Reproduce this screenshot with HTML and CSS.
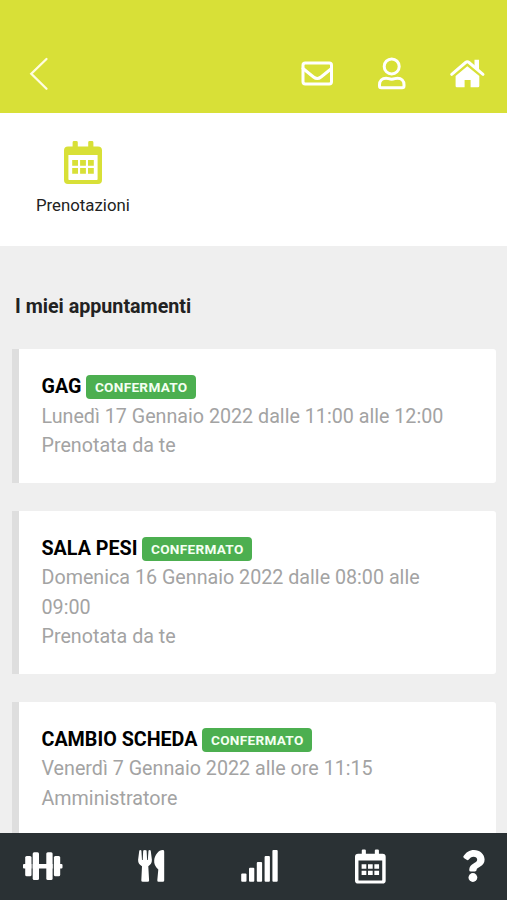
FILE: index.html
```html
<!DOCTYPE html>
<html lang="it">
<head>
<meta charset="utf-8">
<meta name="viewport" content="width=device-width, initial-scale=1">
<title>Prenotazioni</title>
<link rel="stylesheet" href="styles.css">
</head>
<body>
<div class="app">
  <header class="topbar">
    <svg class="icon" width="20" height="33" viewBox="29 57 20 33"><path class="line thin" d="M46.5 59 31.3 73.8 46.5 88.7"/></svg>
    <nav class="topbar-actions">
      <svg class="icon" width="33" height="33" viewBox="301 57 33 33"><rect class="line" x="303" y="63" width="28.5" height="21" rx="2.2"/><path class="line" d="M303 68.5 313.5 77Q317.3 80 321 77L331.5 68.5"/></svg>
      <svg class="icon" width="29" height="33" viewBox="377.5 57 29 33"><circle class="line" cx="391.2" cy="66.4" r="7.5"/><path class="line" d="M385.6 78.2C381.5 78.2 379 81 379 84.8V86Q379 87.7 380.8 87.7H401.6Q403.5 87.7 403.5 86V84.8C403.5 81 401 78.2 397 78.2C394.5 78.2 394 79.2 391.2 79.2S388 78.2 385.6 78.2Z"/></svg>
      <svg class="icon" width="35" height="33" viewBox="450 57 35 33"><path class="fill" d="M467.3 66.2 479.3 76V86Q479.3 87.3 478 87.3H470.6V80H464.6V87.3H456.9Q455.6 87.3 455.6 86V76Z"/><path class="line" d="M451.7 74.3 465.6 62.5Q467.3 61.1 469 62.5L483 74.3"/><path class="fill" d="M474.5 59.8H479V70L474.5 66Z"/></svg>
    </nav>
  </header>

  <section class="shortcuts">
    <a class="shortcut">
      <svg class="icon lime" width="38" height="43" viewBox="0 0 38 43"><path class="fill" fill-rule="evenodd" d="M10 0H12.4Q13.8 0 13.8 1.4V5.5H24.2V1.4Q24.2 0 25.6 0H28Q29.4 0 29.4 1.4V5.5H34Q38 5.5 38 9.5V39Q38 43 34 43H4Q0 43 0 39V9.5Q0 5.5 4 5.5H8.6V1.4Q8.6 0 10 0ZM4.4 14V38.2Q4.4 39 5.2 39H32.8Q33.6 39 33.6 38.2V14Z"/><path class="fill" d="M8.2 19h5.8v5.8h-5.8zM16.1 19h5.8v5.8h-5.8zM24 19h5.8v5.8h-5.8zM8.2 26.9h5.8v5.8h-5.8zM16.1 26.9h5.8v5.8h-5.8zM24 26.9h5.8v5.8h-5.8z"/></svg>
      <span class="shortcut-label">Prenotazioni</span>
    </a>
  </section>

  <main class="content">
    <h1 class="title">I miei appuntamenti</h1>
    <article class="card">
      <h2 class="card-title"><span>GAG</span><span class="badge">CONFERMATO</span></h2>
      <p>Lunedì 17 Gennaio 2022 dalle 11:00 alle 12:00</p>
      <p>Prenotata da te</p>
    </article>
    <article class="card">
      <h2 class="card-title"><span>SALA PESI</span><span class="badge">CONFERMATO</span></h2>
      <p>Domenica 16 Gennaio 2022 dalle 08:00 alle 09:00</p>
      <p>Prenotata da te</p>
    </article>
    <article class="card">
      <h2 class="card-title"><span>CAMBIO SCHEDA</span><span class="badge">CONFERMATO</span></h2>
      <p>Venerdì 7 Gennaio 2022 alle ore 11:15</p>
      <p>Amministratore</p>
    </article>
  </main>

  <nav class="tabbar">
    <svg class="icon" width="42" height="35" viewBox="20 849 42 35"><rect class="fill" x="23" y="864" width="39.5" height="4.6" rx="1"/><rect class="gap" x="31.4" y="863" width="1.3" height="7"/><rect class="gap" x="52.6" y="863" width="1.3" height="7"/><rect class="fill" x="25.2" y="856" width="6.3" height="20.2" rx="1.5"/><rect class="fill" x="32.7" y="852.2" width="6.3" height="27.8" rx="1.5"/><rect class="fill" x="46.3" y="852.2" width="6.3" height="27.8" rx="1.5"/><rect class="fill" x="53.9" y="856" width="6.3" height="20.2" rx="1.5"/></svg>
    <svg class="icon" width="27" height="35" viewBox="138 849 27 35"><path class="fill" d="M139.3 850.4Q140.3 849.8 141.4 850.4L142 860H142.7L143.2 850.4Q144.9 849.7 146.6 850.4L147.1 860H147.8L148.5 850.4Q149.6 849.8 150.7 850.4L151.9 859.8C152 863 150.5 865 148.3 866.2L149.1 880.4Q149.1 881.8 147.7 881.8H142.8Q141.3 881.8 141.3 880.4L142 866.2C139.5 865 138 863 138.1 859.8Z"/><path class="fill" d="M164.2 851.4V880.4Q164.2 881.8 162.8 881.8H158.6Q157.2 881.8 157.3 880.3L158.3 869.6C155 866.8 153.9 863.5 154.2 860.3C154.7 855 158.6 850 162.8 850Q164.2 850 164.2 851.4Z"/></svg>
    <svg class="icon" width="38" height="35" viewBox="241 849 38 35"><rect class="fill" x="241.2" y="873.6" width="5.3" height="8.2" rx="1"/><rect class="fill" x="249" y="867.8" width="5.3" height="14" rx="1"/><rect class="fill" x="256.8" y="861.9" width="5.3" height="19.9" rx="1"/><rect class="fill" x="264.6" y="856" width="5.3" height="25.8" rx="1"/><rect class="fill" x="272.4" y="850" width="5.3" height="31.8" rx="1"/></svg>
    <svg class="icon" width="31" height="35" viewBox="0 0 39.4 44.5"><path class="fill" fill-rule="evenodd" d="M10 .6H12.4Q13.8 .6 13.8 2V6H25.2V2Q25.2 .6 26.6 .6H29Q30.4 .6 30.4 2V6H35Q39 6 39 10V40Q39 44 35 44H4Q0 44 0 40V10Q0 6 4 6H8.6V2Q8.6 .6 10 .6ZM4.4 14.6V39.4Q4.4 40.2 5.2 40.2H33.8Q34.6 40.2 34.6 39.4V14.6Z"/><path class="fill" d="M8.4 19.4h6v5.6h-6zM16.5 19.4h6v5.6h-6zM24.6 19.4h6v5.6h-6zM8.4 27.6h6v5.6h-6zM16.5 27.6h6v5.6h-6zM24.6 27.6h6v5.6h-6z"/></svg>
    <svg class="icon" width="23" height="35" viewBox="462 849 23 35"><path class="fill" d="M463.4 856.3C466 852.3 469.3 850 474 850C479.8 850 484.6 854.2 484.6 859.6C484.6 866.8 476.6 867.3 476.6 869.8Q476.6 871.6 474.8 871.6H470.9Q469.2 871.6 469.2 869.9C469.2 863 477.2 863.4 477.2 859.7C477.2 857.8 475.6 856.7 473.6 856.7C471.3 856.7 470.2 857.8 468.8 859.5Q467.8 860.7 466.6 859.8L463.9 857.9Q463 857.2 463.4 856.3Z"/><circle class="fill" cx="472.9" cy="877.5" r="4.4"/></svg>
  </nav>
</div>
</body>
</html>
```
FILE: styles.css
```css
* {
  box-sizing: border-box;
}

body {
  margin: 0;
  font-family: Roboto, sans-serif;
  background: #efefef;
}

.app {
  display: flex;
  flex-direction: column;
  height: 900px;
  overflow: hidden;
}

.icon {
  display: block;
  flex: none;
  overflow: visible;
  color: #fff;
}

.lime {
  color: #d8e037;
}

.fill {
  fill: currentColor;
}

.line {
  fill: none;
  stroke: currentColor;
  stroke-width: 3;
  stroke-linejoin: round;
  stroke-linecap: round;
}

.thin {
  stroke: #fffde0;
  stroke-width: 2.3;
  stroke-linejoin: miter;
}

.gap {
  fill: #2a3134;
}

.topbar {
  flex: none;
  display: flex;
  align-items: center;
  justify-content: space-between;
  height: 113px;
  padding: 34px 22px 0 29px;
  background: #d8e037;
}

.topbar-actions {
  display: flex;
  gap: 43.5px;
}

.shortcuts {
  flex: none;
  height: 133px;
  padding: 28px 36px 0;
  background: #fff;
}

.shortcut {
  display: inline-flex;
  flex-direction: column;
  align-items: center;
  gap: 9px;
}

.shortcut-label {
  font-size: 16.8px;
  line-height: 24px;
  color: #222;
}

.content {
  flex: 1;
  min-height: 0;
  overflow: hidden;
  padding: 46px 11px 0 12px;
}

.title {
  margin: 0 0 27px 3px;
  font-size: 19.7px;
  line-height: 30px;
  font-weight: 700;
  color: #222;
}

.card {
  margin-bottom: 28px;
  padding: 23px 23px 22px 22.5px;
  border-left: 7px solid #dedede;
  border-radius: 0 3px 3px 0;
  background: #fff;
  color: #a3a3a3;
  font-size: 19.7px;
  line-height: 29.5px;
}

.card p {
  margin: 0;
}

.card-title {
  display: flex;
  align-items: center;
  gap: 5px;
  height: 29.5px;
  margin: 0;
  font-size: 19.7px;
  font-weight: 700;
  color: #000;
}

.badge {
  height: 24px;
  margin-top: 1px;
  padding: 0 8.5px;
  border-radius: 4px;
  background: #4caf50;
  color: #f4fff2;
  font-size: 13.6px;
  letter-spacing: 0.3px;
  line-height: 24px;
}

.tabbar {
  flex: none;
  display: flex;
  align-items: center;
  gap: 76px;
  height: 67px;
  padding-left: 20px;
  background: #2a3134;
}
```
